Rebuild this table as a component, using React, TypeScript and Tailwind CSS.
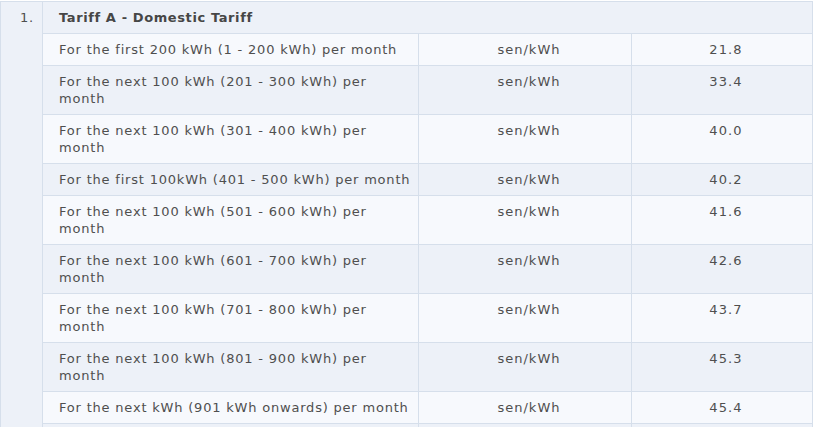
import React from "react";

const rows: [string, string, string][] = [
  ["For the first 200 kWh (1 - 200 kWh) per month", "sen/kWh", "21.8"],
  ["For the next 100 kWh (201 - 300 kWh) per month", "sen/kWh", "33.4"],
  ["For the next 100 kWh (301 - 400 kWh) per month", "sen/kWh", "40.0"],
  ["For the first 100kWh (401 - 500 kWh) per month", "sen/kWh", "40.2"],
  ["For the next 100 kWh (501 - 600 kWh) per month", "sen/kWh", "41.6"],
  ["For the next 100 kWh (601 - 700 kWh) per month", "sen/kWh", "42.6"],
  ["For the next 100 kWh (701 - 800 kWh) per month", "sen/kWh", "43.7"],
  ["For the next 100 kWh (801 - 900 kWh) per month", "sen/kWh", "45.3"],
  ["For the next kWh (901 kWh onwards) per month", "sen/kWh", "45.4"],
  ["", "", ""],
];

export default function App() {
  return (
    <div
      className="min-h-screen bg-white pt-px text-[13px] leading-[17px] tracking-[0.8px] text-[#4f4f4f]"
      style={{ fontFamily: '"DejaVu Sans", Verdana, sans-serif' }}
    >
      <table className="w-[812px] table-fixed border-collapse">
        <colgroup>
          <col className="w-[42px]" />
          <col className="w-[376px]" />
          <col className="w-[213px]" />
          <col className="w-[181px]" />
        </colgroup>
        <tbody>
          <tr>
            <td
              rowSpan={rows.length + 1}
              className="border border-[#d6dfeb] bg-[#edf1f8] pl-[19px] pt-[7px] align-top"
            >
              1.
            </td>
            <td
              colSpan={3}
              className="border border-[#d6dfeb] bg-[#edf1f8] pl-[16px] pt-[7px] pb-[7px] align-top font-bold tracking-[0.6px] text-[#464646]"
            >
              Tariff A - Domestic Tariff
            </td>
          </tr>
          {rows.map(([label, unit, value], i) => {
            const bg = i % 2 === 0 ? "bg-[#f7f9fd]" : "bg-[#edf1f8]";
            return (
              <tr key={i} className={bg}>
                <td className="h-[32px] border border-[#d6dfeb] pl-[16px] pr-[4px] pt-[7px] pb-[7px] align-top">
                  {label}
                </td>
                <td className="border border-[#d6dfeb] pl-[8px] pt-[7px] pb-[7px] text-center align-top tracking-[1px]">
                  {unit}
                </td>
                <td className="border border-[#d6dfeb] pl-[8px] pt-[7px] pb-[7px] text-center align-top tracking-[1.1px]">
                  {value}
                </td>
              </tr>
            );
          })}
        </tbody>
      </table>
    </div>
  );
}
